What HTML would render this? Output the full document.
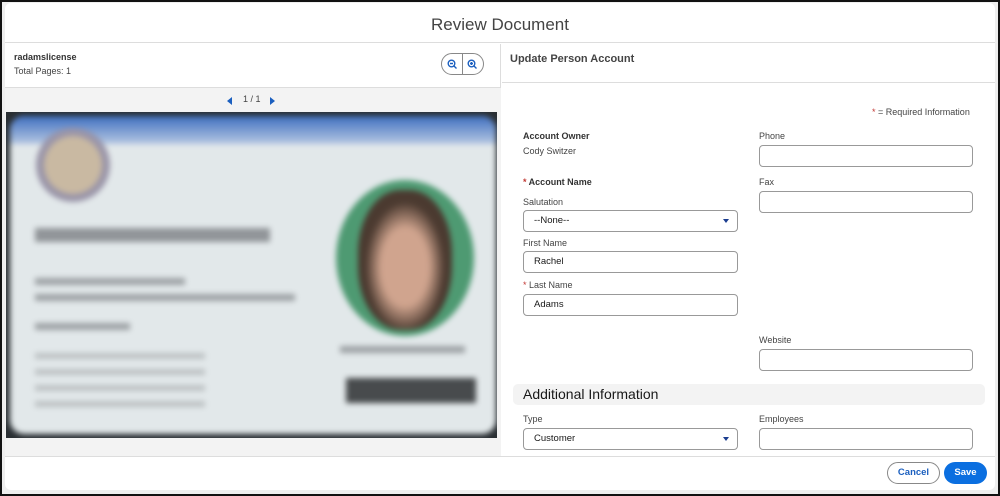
<!DOCTYPE html>
<html><head><style>
*{box-sizing:border-box;margin:0;padding:0}
body{width:1000px;height:496px;background:#fff;font-family:"Liberation Sans",sans-serif;color:#181818;position:relative;overflow:hidden}
.frame{position:absolute;left:0;top:0;width:1000px;height:496px;border:2px solid #111;background:#eeeeee}
.modal{position:absolute;left:3px;top:1px;width:990px;height:487px;background:#fff;border-radius:6px;overflow:hidden}
.hdr{height:40px;border-bottom:1px solid #ddd;text-align:center;font-size:17px;line-height:44px;color:#444}
.abs{position:absolute}
.lbl{font-size:9px;color:#444}
.inp{position:absolute;height:22px;border:1px solid #999;border-radius:4px;background:#fff;font-size:9.5px;line-height:20px;padding-left:10px;color:#181818}
.caret{position:absolute;right:8px;top:8px;width:0;height:0;border-left:3.5px solid transparent;border-right:3.5px solid transparent;border-top:4px solid #1b3d8f}
.req{color:#c23934}
</style></head><body>
<div class="frame">
<div class="modal">
 <div class="hdr">Review Document</div>
 <div class="abs" style="left:0;top:41px;width:496px;height:412px;border-right:1px solid #ddd">
  <div class="abs" style="left:9px;top:8px;font-size:9px;font-weight:bold;color:#333">radamslicense</div>
  <div class="abs" style="left:9px;top:22px;font-size:9px;color:#444">Total Pages: 1</div>
  <div class="abs" style="left:436px;top:9px;width:43px;height:22px;border:1px solid #888;border-radius:11px">
   <div class="abs" style="left:20px;top:0;width:1px;height:20px;background:#888"></div>
   <svg class="abs" style="left:5px;top:5px" width="11" height="11" viewBox="0 0 11 11"><circle cx="4.5" cy="4.5" r="3.3" fill="none" stroke="#1b5fbf" stroke-width="1.4"/><path d="M3 4.5h3M7 7l2.5 2.5" stroke="#1b5fbf" stroke-width="1.4"/></svg>
   <svg class="abs" style="left:25px;top:5px" width="11" height="11" viewBox="0 0 11 11"><circle cx="4.5" cy="4.5" r="3.3" fill="none" stroke="#1b5fbf" stroke-width="1.4"/><path d="M3 4.5h3M4.5 3v3M7 7l2.5 2.5" stroke="#1b5fbf" stroke-width="1.4"/></svg>
  </div>
  <div class="abs" style="left:0;top:43px;width:496px;height:369px;background:#f3f3f3;border-top:1px solid #ddd"></div>
  <div class="abs" style="left:222px;top:53px;width:0;height:0;border-top:4px solid transparent;border-bottom:4px solid transparent;border-right:5px solid #1b5fbf"></div>
  <div class="abs" style="left:238px;top:50px;font-size:9px;color:#444">1 / 1</div>
  <div class="abs" style="left:265px;top:53px;width:0;height:0;border-top:4px solid transparent;border-bottom:4px solid transparent;border-left:5px solid #1b5fbf"></div>
  <div class="abs" style="left:1px;top:68px;width:491px;height:326px;background:#2a2f33;overflow:hidden">
   <div class="abs" style="left:4px;top:4px;width:486px;height:318px;border-radius:14px;background:#e2e8ea;overflow:hidden;filter:blur(3px)">
    <div class="abs" style="left:0;top:0;width:486px;height:28px;background:linear-gradient(#3f6fc0,#b5c7e2)"></div>
    <div class="abs" style="left:26px;top:12px;width:74px;height:74px;border-radius:50%;background:#9a95a8"><div style="margin:8px;width:58px;height:58px;border-radius:50%;background:#c9b9a2"></div></div>
    <div class="abs" style="left:25px;top:112px;width:235px;height:14px;background:#767a7d;opacity:.75"></div>
    <div class="abs" style="left:25px;top:162px;width:150px;height:7px;background:#9da2a5"></div>
    <div class="abs" style="left:25px;top:178px;width:260px;height:7px;background:#9da2a5"></div>
    <div class="abs" style="left:25px;top:207px;width:95px;height:7px;background:#9da2a5"></div>
    <div class="abs" style="left:25px;top:237px;width:170px;height:60px;background:repeating-linear-gradient(#bcc1c3 0 6px,transparent 6px 16px)"></div>
    <div class="abs" style="left:326px;top:64px;width:138px;height:156px;border-radius:50%;background:#4e9a72"><div style="margin:10px 22px;width:94px;height:140px;border-radius:45%;background:radial-gradient(ellipse at 50% 55%,#d0a48e 35%,#4b3a30 60%)"></div></div>
    <div class="abs" style="left:330px;top:230px;width:125px;height:7px;background:#9da2a5"></div>
    <div class="abs" style="left:336px;top:262px;width:130px;height:25px;background:#484b4d"></div>
   </div>
  </div>
 </div>
 <div class="abs" style="left:497px;top:41px;width:493px;height:412px">
  <div class="abs" style="left:8px;top:9px;font-size:11px;font-weight:bold;color:#444">Update Person Account</div>
  <div class="abs" style="left:0;top:38px;width:493px;height:1px;background:#ddd"></div>
  <div class="abs" style="left:370px;top:63px;font-size:9px;color:#444"><span class="req">*</span> = Required Information</div>
  <div class="abs" style="left:21px;top:87px;font-size:9px;font-weight:bold;color:#333">Account Owner</div>
  <div class="abs" style="left:21px;top:102px;font-size:9px;color:#444">Cody Switzer</div>
  <div class="abs" style="left:21px;top:133px;font-size:9px;font-weight:bold;color:#333"><span class="req">*</span> Account Name</div>
  <div class="abs lbl" style="left:21px;top:153px">Salutation</div>
  <div class="inp" style="left:21px;top:166px;width:215px">--None--<span class="caret"></span></div>
  <div class="abs lbl" style="left:21px;top:194px">First Name</div>
  <div class="inp" style="left:21px;top:207px;width:215px">Rachel</div>
  <div class="abs lbl" style="left:21px;top:236px"><span class="req">*</span> Last Name</div>
  <div class="inp" style="left:21px;top:250px;width:215px">Adams</div>
  <div class="abs lbl" style="left:257px;top:87px">Phone</div>
  <div class="inp" style="left:257px;top:101px;width:214px"></div>
  <div class="abs lbl" style="left:257px;top:133px">Fax</div>
  <div class="inp" style="left:257px;top:147px;width:214px"></div>
  <div class="abs lbl" style="left:257px;top:291px">Website</div>
  <div class="inp" style="left:257px;top:305px;width:214px"></div>
  <div class="abs" style="left:11px;top:340px;width:472px;height:21px;background:#f3f3f3;border-radius:5px;font-size:14px;color:#181818;line-height:21px;padding-left:10px">Additional Information</div>
  <div class="abs lbl" style="left:21px;top:370px">Type</div>
  <div class="inp" style="left:21px;top:384px;width:215px">Customer<span class="caret"></span></div>
  <div class="abs lbl" style="left:257px;top:370px">Employees</div>
  <div class="inp" style="left:257px;top:384px;width:214px"></div>
 </div>
 <div class="abs" style="left:0;top:453px;width:990px;height:1px;background:#ddd"></div>
 <div class="abs" style="left:882px;top:459px;width:53px;height:22px;border:1px solid #888;border-radius:11px;font-size:9.5px;font-weight:bold;color:#1b5fbf;text-align:center;line-height:20px">Cancel</div>
 <div class="abs" style="left:939px;top:459px;width:43px;height:22px;background:#0b6fe0;border-radius:11px;font-size:9.5px;font-weight:bold;color:#fff;text-align:center;line-height:22px">Save</div>
</div>
</div>
</body></html>
